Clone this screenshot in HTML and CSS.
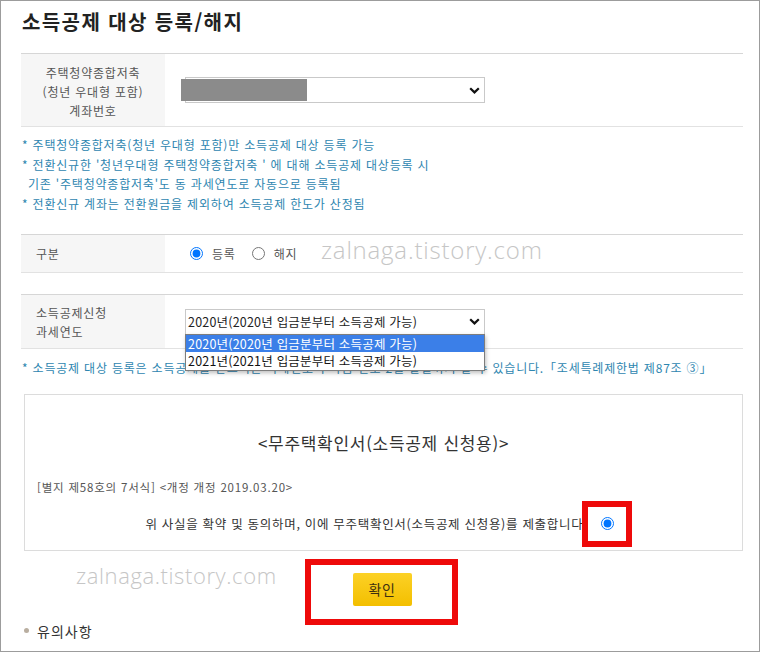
FILE: index.html
```html
<!DOCTYPE html>
<html lang="ko">
<head>
<meta charset="utf-8">
<title>소득공제 대상 등록/해지</title>
<link rel="stylesheet" href="styles.css">
</head>
<body>
<div class="frame">
  <h1 class="title">소득공제 대상 등록/해지</h1>

  <div class="row row-account">
    <div class="label label-center">주택청약종합저축<br>(청년 우대형 포함)<br>계좌번호</div>
    <div class="value">
      <div class="select">
        <span class="redact"></span>
        <span class="select-text"></span>
        <svg class="chevron" width="11" height="7" viewBox="0 0 11 7"><path d="M1.2 1.2 L5.5 5.4 L9.8 1.2" fill="none" stroke="#111" stroke-width="2.2"/></svg>
      </div>
    </div>
  </div>

  <ul class="notes">
    <li>* 주택청약종합저축(청년 우대형 포함)만 소득공제 대상 등록 가능</li>
    <li>* 전환신규한 '청년우대형 주택청약종합저축 ' 에 대해 소득공제 대상등록 시<br><span class="indent">기존 '주택청약종합저축'도 동 과세연도로 자동으로 등록됨</span></li>
    <li>* 전환신규 계좌는 전환원금을 제외하여 소득공제 한도가 산정됨</li>
  </ul>

  <div class="row row-type">
    <div class="label">구분</div>
    <div class="value">
      <div class="radios">
        <input type="radio" name="kind" id="r1" checked><label for="r1">등록</label>
        <input type="radio" name="kind" id="r2" class="second"><label for="r2">해지</label>
      </div>
    </div>
  </div>

  <div class="row row-year">
    <div class="label">소득공제신청<br>과세연도</div>
    <div class="value">
      <div class="select">
        <span class="select-text">2020년(2020년 입금분부터 소득공제 가능)</span>
        <svg class="chevron" width="11" height="7" viewBox="0 0 11 7"><path d="M1.2 1.2 L5.5 5.4 L9.8 1.2" fill="none" stroke="#111" stroke-width="2.2"/></svg>
        <div class="dropdown">
          <div class="opt active">2020년(2020년 입금분부터 소득공제 가능)</div>
          <div class="opt">2021년(2021년 입금분부터 소득공제 가능)</div>
        </div>
      </div>
    </div>
  </div>

  <p class="note-single">* 소득공제 대상 등록은 소득공제를 받으려는 과세연도의 다음 연도 2월 말일까지 할 수 있습니다.「조세특례제한법 제87조 ③」</p>

  <div class="doc-box">
    <p class="doc-title">&lt;무주택확인서(소득공제 신청용)&gt;</p>
    <p class="doc-sub">[별지 제58호의 7서식] &lt;개정 개정 2019.03.20&gt;</p>
    <div class="doc-agree">
      <span>위 사실을 확약 및 동의하며, 이에 무주택확인서(소득공제 신청용)를 제출합니다.</span>
      <span class="agree-radio">
        <input type="radio" checked>
        <span class="mark mark-radio"></span>
      </span>
    </div>
  </div>

  <div class="confirm">
    <button class="btn" type="button">확인<span class="mark mark-btn"></span></button>
  </div>

  <div class="notice">유의사항</div>

  <div class="watermark wm1">zalnaga.tistory.com</div>
  <div class="watermark wm2">zalnaga.tistory.com</div>
</div>
</body>
</html>
```

FILE: styles.css
```css
* { box-sizing: border-box; }

body {
  margin: 0;
  background: #fff;
  font-family: "Noto Sans CJK KR", "Noto Sans", sans-serif;
  color: #333;
}

.frame {
  position: relative;
  width: 760px;
  height: 652px;
  border: 1px solid #9c9c9c;
  padding: 9px 16px 0 20px;
  overflow: hidden;
}

.title {
  margin: 0 0 0 1px;
  font-size: 20px;
  line-height: 24px;
  font-weight: 700;
  letter-spacing: 1.4px;
  color: #222;
}

.row {
  display: flex;
  width: 722px;
  border-top: 1px solid #d6d6d6;
  border-bottom: 1px solid #e2e2e2;
}

.row-account { margin-top: 19px; height: 74px; }
.row-type { margin-top: 21px; height: 39px; }
.row-year { margin-top: 21px; height: 55px; }

.label {
  width: 144px;
  background: #f6f6f6;
  font-size: 12px;
  line-height: 19px;
  letter-spacing: 0.8px;
  color: #555;
  display: flex;
  align-items: center;
  padding-left: 15px;
}

.label-center {
  justify-content: center;
  text-align: center;
  padding-left: 0;
  padding-top: 3px;
}

.value {
  flex: 1;
  display: flex;
  align-items: center;
  padding-left: 20px;
}

.select {
  position: relative;
  width: 300px;
  height: 26px;
  border: 1px solid #c9c9c9;
  display: flex;
  align-items: center;
  padding: 0 4px 0 2px;
  font-size: 12.5px;
  letter-spacing: 0.2px;
  color: #222;
  background: #fff;
}

.select-text { flex: 1; white-space: nowrap; }

.chevron { display: block; }

.redact {
  position: absolute;
  left: -5px;
  top: 1px;
  width: 126px;
  height: 22px;
  background: #8b8b8b;
}

.dropdown {
  position: absolute;
  left: -1px;
  top: 100%;
  width: 300px;
  background: #fff;
  border: 1px solid #7d7d7d;
  box-shadow: 1px 2px 4px rgba(0, 0, 0, 0.25);
  z-index: 3;
}

.opt {
  height: 17.5px;
  line-height: 17px;
  padding-left: 2px;
  font-size: 12.5px;
  letter-spacing: 0.2px;
  color: #111;
  white-space: nowrap;
}

.opt.active { background: #3b7fe8; color: #fff; }

.notes {
  margin: 8px 0 0 1px;
  padding: 0;
  list-style: none;
  font-size: 12px;
  line-height: 19.5px;
  letter-spacing: 0.8px;
  color: #2e86b0;
}

.indent { padding-left: 6px; }

.radios {
  display: flex;
  align-items: center;
  padding-left: 5px;
  font-size: 12px;
  letter-spacing: 0.8px;
  color: #555;
}

.radios input { margin: 0; width: 13px; height: 13px; }
.radios label { margin-left: 9px; }
.radios input.second { margin-left: 16px; }

.note-single {
  margin: 9px 0 0 1px;
  font-size: 12px;
  line-height: 19.5px;
  letter-spacing: 0.8px;
  color: #2e86b0;
  white-space: nowrap;
}

.doc-box {
  margin: 16px 0 0 3px;
  width: 719px;
  height: 157px;
  border: 1px solid #dcdcdc;
  padding-top: 36px;
}

.doc-title {
  margin: 0;
  text-align: center;
  font-size: 17px;
  line-height: 24px;
  letter-spacing: 0.7px;
  color: #333;
}

.doc-sub {
  margin: 23px 0 0 12px;
  font-size: 11.5px;
  line-height: 18px;
  letter-spacing: 0.8px;
  color: #555;
}

.doc-agree {
  margin-top: 18px;
  display: flex;
  justify-content: center;
  align-items: center;
  gap: 13px;
  padding-right: 8px;
  font-size: 12.5px;
  line-height: 20px;
  letter-spacing: 0.7px;
  color: #333;
}

.agree-radio { position: relative; display: flex; }
.agree-radio input { margin: 0; width: 13px; height: 13px; }

.mark {
  position: absolute;
  border: 6px solid #ee0a0a;
  pointer-events: none;
}

.mark-radio {
  left: -19px;
  top: -16px;
  width: 50px;
  height: 46px;
}

.confirm {
  margin-top: 22px;
  display: flex;
  justify-content: center;
}

.btn {
  position: relative;
  width: 59px;
  height: 33px;
  border: none;
  border-radius: 2px;
  background: linear-gradient(#fcd126, #f3bf00);
  font-family: inherit;
  font-size: 14px;
  letter-spacing: 0.5px;
  color: #3d2f10;
  padding: 0;
}

.mark-btn {
  left: -48px;
  top: -14px;
  width: 153px;
  height: 66px;
}

.notice {
  margin: 15px 0 0 3px;
  display: flex;
  align-items: center;
  font-size: 14px;
  line-height: 20px;
  letter-spacing: 1px;
  color: #333;
}

.notice::before {
  content: "";
  width: 5px;
  height: 5px;
  border-radius: 50%;
  background: #b9aea0;
  margin-right: 8px;
}

.watermark {
  position: absolute;
  font-family: "Open Sans", "Lato", sans-serif;
  font-weight: 300;
  color: #c6c6c6;
  white-space: nowrap;
}

.wm1 { left: 320px; top: 232px; font-size: 24px; letter-spacing: 0.8px; }
.wm2 { left: 75px; top: 559px; font-size: 22px; letter-spacing: 0.6px; }
```
